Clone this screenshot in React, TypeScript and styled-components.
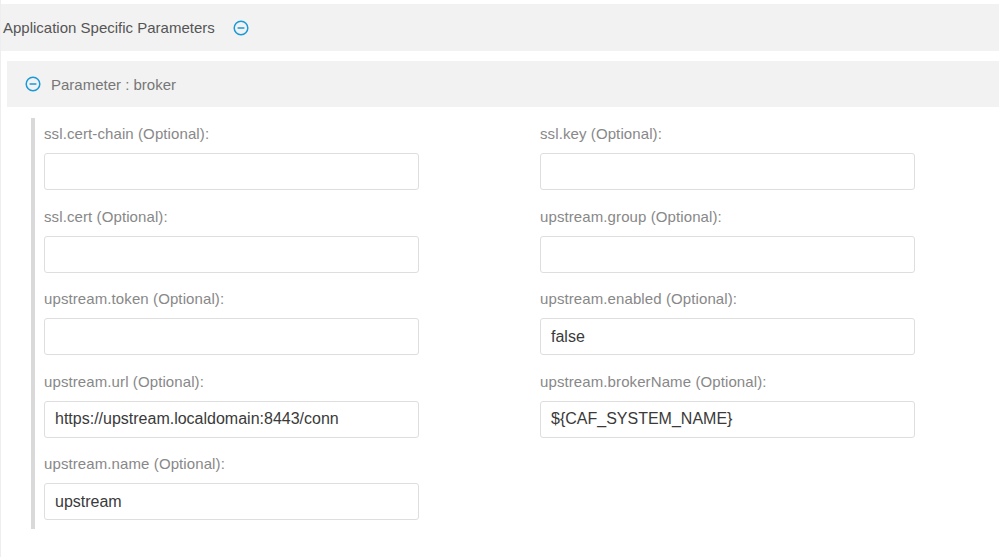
import React from "react";
import styled, { createGlobalStyle } from "styled-components";

const Global = createGlobalStyle`
  html, body { margin: 0; background: #fff; font-family: "Helvetica Neue", "Liberation Sans", Arial, sans-serif; }
`;

const Page = styled.div`
  width: 999px; height: 557px; padding-top: 4px; box-sizing: border-box;
  border-left: 1px solid #eeeeee; overflow: hidden;
`;
const Header = styled.div`
  height: 47px; background: #f2f2f2; display: flex; align-items: center;
  padding-left: 2px; gap: 18px; font-size: 15px; color: #555;
`;
const Body = styled.div`padding: 10px 0 0 6px;`;
const SubHeader = styled.div`
  height: 46px; background: #f2f2f2; display: flex; align-items: center;
  padding-left: 18px; gap: 10px; font-size: 15px; color: #777;
`;
const Section = styled.div`
  margin: 11px 0 0 24px; border-left: 4px solid #d9d9d9; padding-left: 9px;
  display: grid; grid-template-columns: 375px 375px; column-gap: 121px; row-gap: 10.5px;
  padding-bottom: 9px;
`;
const Field = styled.div`display: flex; flex-direction: column;`;
const Label = styled.div`font-size: 15px; letter-spacing: 0.1px; color: #888; height: 21px; line-height: 21px; margin: 5px 0 9px;`;
const Input = styled.div`
  height: 37px; box-sizing: border-box; border: 1px solid #dedede; border-radius: 3px;
  display: flex; align-items: center; padding-left: 10px; font-size: 16px; color: #3a3a3a;
`;

const Minus = () => (
  <svg width="16" height="16" viewBox="0 0 16 16">
    <circle cx="8" cy="8" r="6.8" fill="none" stroke="#1a9ad6" strokeWidth="1.5" />
    <line x1="4.6" y1="8" x2="11.4" y2="8" stroke="#1a9ad6" strokeWidth="1.5" />
  </svg>
);

const fields: [string, string][] = [
  ["ssl.cert-chain (Optional):", ""],
  ["ssl.key (Optional):", ""],
  ["ssl.cert (Optional):", ""],
  ["upstream.group (Optional):", ""],
  ["upstream.token (Optional):", ""],
  ["upstream.enabled (Optional):", "false"],
  ["upstream.url (Optional):", "https://upstream.localdomain:8443/conn"],
  ["upstream.brokerName (Optional):", "${CAF_SYSTEM_NAME}"],
  ["upstream.name (Optional):", "upstream"],
];

export default function App() {
  return (
    <Page>
      <Global />
      <Header>Application Specific Parameters <Minus /></Header>
      <Body>
        <SubHeader><Minus />Parameter : broker</SubHeader>
        <Section>
          {fields.map(([l, v]) => (
            <Field key={l}>
              <Label>{l}</Label>
              <Input>{v}</Input>
            </Field>
          ))}
        </Section>
      </Body>
    </Page>
  );
}
